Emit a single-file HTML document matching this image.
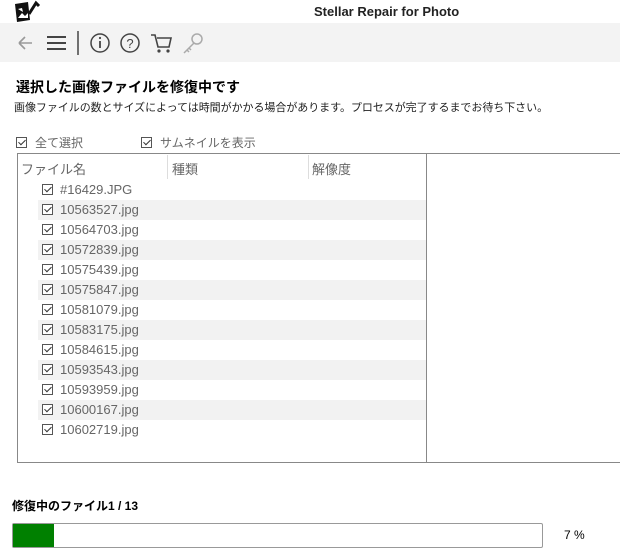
<!DOCTYPE html>
<html><head><meta charset="utf-8"><style>
*{margin:0;padding:0;box-sizing:border-box}
body{width:620px;height:557px;background:#fff;font-family:"Liberation Sans","Noto Sans CJK JP",sans-serif;position:relative;overflow:hidden;color:#000}
.a{position:absolute;white-space:nowrap}
.cb{position:absolute;width:11px;height:11px;border:1px solid #555;background:#fff}
.cb:after{content:"";position:absolute;left:3px;top:0px;width:3px;height:6px;border:solid #333;border-width:0 1.5px 1.5px 0;transform:rotate(45deg)}
.row{position:absolute;left:38px;width:388px;height:20px}
.row.g{background:#f2f2f2}
.row span{position:absolute;left:22px;top:2px;font-size:13px;color:#666}
.row .cb{left:4px;top:4px}
</style></head><body>
<div class="a" style="left:0;top:0;width:620px;height:23px;background:#fff"></div>
<svg class="a" style="left:14px;top:0" width="28" height="22" viewBox="0 0 28 22"><path d="M1 4 L14 2 L16 20 L3 22 Z" fill="#111"/><path d="M4 9 l4 -1 l1 4z M4 18 l4-5 l3 3 l3-3 v5z" fill="#fff"/><path d="M15 14 L22 3 L25 6" stroke="#111" stroke-width="3" fill="none"/></svg>
<div class="a" style="left:314px;top:4px;font-size:13px;font-weight:bold;color:#222">Stellar Repair for Photo</div>
<div class="a" style="left:0;top:23px;width:620px;height:39px;background:#f3f3f3"></div>
<svg class="a" style="left:14px;top:30px" width="200" height="26" viewBox="0 0 200 26">
<path d="M5 13 H18 M5 13 L11 7 M5 13 L11 19" stroke="#999" stroke-width="1.6" fill="none"/>
<path d="M33 7 H52 M33 13 H52 M33 19 H52" stroke="#444" stroke-width="2" fill="none"/>
<path d="M64 1 V25" stroke="#444" stroke-width="1.5"/>
<circle cx="86" cy="13" r="9" stroke="#444" stroke-width="1.5" fill="none"/><path d="M86 11 V18" stroke="#444" stroke-width="1.8"/><circle cx="86" cy="8" r="1.1" fill="#444"/>
<circle cx="116" cy="13" r="9" stroke="#444" stroke-width="1.5" fill="none"/><text x="116" y="18" font-size="13" text-anchor="middle" fill="#444" font-family="Liberation Sans">?</text>
<path d="M137 5 h4 l3 12 h11 l2 -9 h-14" stroke="#444" stroke-width="1.6" fill="none"/><circle cx="145" cy="21" r="1.6" fill="#444"/><circle cx="154" cy="21" r="1.6" fill="#444"/>
<circle cx="183" cy="9" r="5" stroke="#aaa" stroke-width="1.5" fill="none"/><path d="M180 13 L170 23 M173 20 l2 2 M175 18 l2 2" stroke="#aaa" stroke-width="1.5" fill="none"/>
</svg>
<div class="a" style="left:16px;top:77px;font-size:14px;font-weight:bold">選択した画像ファイルを修復中です</div>
<div class="a" style="left:14px;top:99px;font-size:11px;letter-spacing:-0.05px;color:#222">画像ファイルの数とサイズによっては時間がかかる場合があります。プロセスが完了するまでお待ち下さい。</div>
<div class="cb" style="left:16px;top:137px"></div><div class="a" style="left:35px;top:134px;font-size:12px;color:#666">全て選択</div>
<div class="cb" style="left:141px;top:137px"></div><div class="a" style="left:160px;top:134px;font-size:12px;color:#666">サムネイルを表示</div>
<div class="a" style="left:17px;top:153px;width:610px;height:310px;border:1px solid #888"></div>
<div class="a" style="left:426px;top:153px;width:1px;height:310px;background:#888"></div>
<div class="a" style="left:167px;top:155px;width:1px;height:24px;background:#ddd"></div>
<div class="a" style="left:308px;top:155px;width:1px;height:24px;background:#ddd"></div>
<div class="a" style="left:21px;top:159px;font-size:13px;color:#666">ファイル名</div>
<div class="a" style="left:172px;top:159px;font-size:13px;color:#666">種類</div>
<div class="a" style="left:312px;top:159px;font-size:13px;color:#666">解像度</div>
<div class="row" style="top:180px"><div class="cb"></div><span>#16429.JPG</span></div>
<div class="row g" style="top:200px"><div class="cb"></div><span>10563527.jpg</span></div>
<div class="row" style="top:220px"><div class="cb"></div><span>10564703.jpg</span></div>
<div class="row g" style="top:240px"><div class="cb"></div><span>10572839.jpg</span></div>
<div class="row" style="top:260px"><div class="cb"></div><span>10575439.jpg</span></div>
<div class="row g" style="top:280px"><div class="cb"></div><span>10575847.jpg</span></div>
<div class="row" style="top:300px"><div class="cb"></div><span>10581079.jpg</span></div>
<div class="row g" style="top:320px"><div class="cb"></div><span>10583175.jpg</span></div>
<div class="row" style="top:340px"><div class="cb"></div><span>10584615.jpg</span></div>
<div class="row g" style="top:360px"><div class="cb"></div><span>10593543.jpg</span></div>
<div class="row" style="top:380px"><div class="cb"></div><span>10593959.jpg</span></div>
<div class="row g" style="top:400px"><div class="cb"></div><span>10600167.jpg</span></div>
<div class="row" style="top:420px"><div class="cb"></div><span>10602719.jpg</span></div>
<div class="a" style="left:12px;top:497px;font-size:12px;font-weight:bold">修復中のファイル1 / 13</div>
<div class="a" style="left:12px;top:523px;width:531px;height:25px;border:1px solid #999;border-radius:2px;background:#fff"></div>
<div class="a" style="left:13px;top:524px;width:41px;height:23px;background:#008000"></div>
<div class="a" style="left:564px;top:528px;font-size:12px">7 %</div>
</body></html>
